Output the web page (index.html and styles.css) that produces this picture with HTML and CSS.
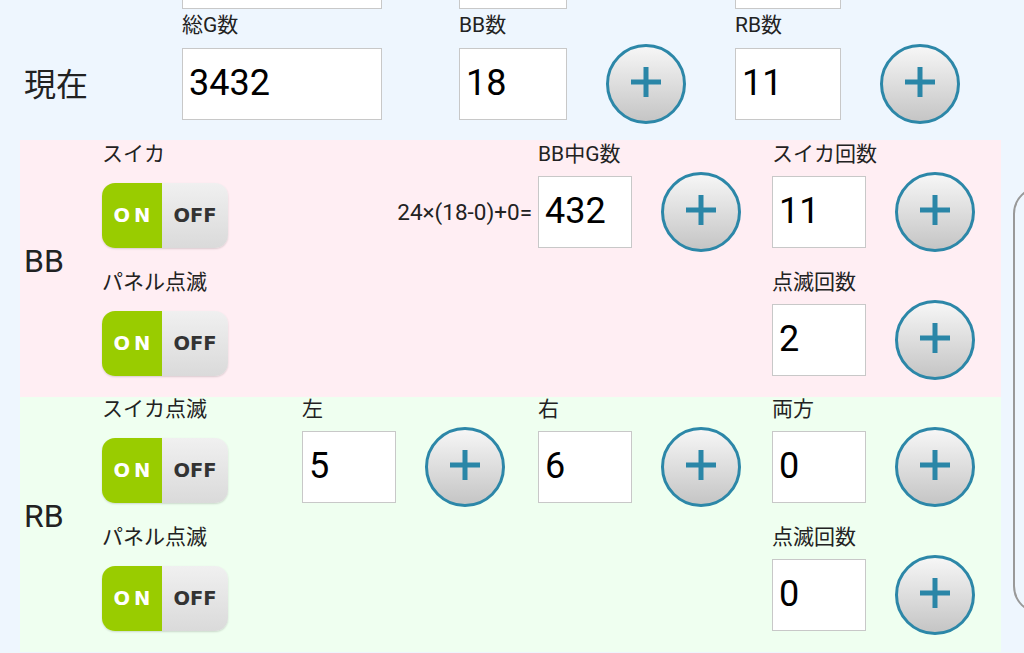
FILE: index.html
```html
<!DOCTYPE html>
<html>
<head>
    <meta charset="utf-8">
    <title>スイカ カウンター</title>
    <link rel="stylesheet" href="styles.css">
</head>
<body>
<div class="screen">

    <!-- 現在 -->
    <div class="now">
        <!-- previous row, scrolled off the top -->
        <span></span>
        <input class="num w200" type="text" value="">
        <input class="num w108" type="text" value="">
        <span></span>
        <input class="num w106" type="text" value="">
        <span></span>

        <span></span>
        <div class="lbl">総G数</div>
        <div class="lbl">BB数</div>
        <span></span>
        <div class="lbl">RB数</div>
        <span></span>

        <div class="head">現在</div>
        <input class="num w200" type="text" value="3432">
        <input class="num w108" type="text" value="18">
        <button class="plus"><svg width="30" height="30" viewBox="0 0 30 30"><path d="M15 0V30M0 15H30"/></svg></button>
        <input class="num w106" type="text" value="11">
        <button class="plus"><svg width="30" height="30" viewBox="0 0 30 30"><path d="M15 0V30M0 15H30"/></svg></button>
    </div>

    <!-- BB -->
    <div class="sec bb">
        <div class="head">BB</div>
        <div class="cell">
            <div class="lbl">スイカ</div>
            <div class="ctl"><div class="toggle"><span class="on">ON</span><span class="off">OFF</span></div></div>
        </div>
        <div class="cell">
            <div class="lbl"></div>
            <div class="ctl formula">24×(18-0)+0=</div>
        </div>
        <div class="cell">
            <div class="lbl">BB中G数</div>
            <div class="ctl">
                <input class="num" type="text" value="432">
                <button class="plus"><svg width="30" height="30" viewBox="0 0 30 30"><path d="M15 0V30M0 15H30"/></svg></button>
            </div>
        </div>
        <div class="cell">
            <div class="lbl">スイカ回数</div>
            <div class="ctl">
                <input class="num" type="text" value="11">
                <button class="plus"><svg width="30" height="30" viewBox="0 0 30 30"><path d="M15 0V30M0 15H30"/></svg></button>
            </div>
        </div>

        <div class="cell">
            <div class="lbl">パネル点滅</div>
            <div class="ctl"><div class="toggle"><span class="on">ON</span><span class="off">OFF</span></div></div>
        </div>
        <div></div>
        <div></div>
        <div class="cell">
            <div class="lbl">点滅回数</div>
            <div class="ctl">
                <input class="num" type="text" value="2">
                <button class="plus"><svg width="30" height="30" viewBox="0 0 30 30"><path d="M15 0V30M0 15H30"/></svg></button>
            </div>
        </div>
    </div>

    <!-- RB -->
    <div class="sec rb">
        <div class="head">RB</div>
        <div class="cell">
            <div class="lbl">スイカ点滅</div>
            <div class="ctl"><div class="toggle"><span class="on">ON</span><span class="off">OFF</span></div></div>
        </div>
        <div class="cell">
            <div class="lbl">左</div>
            <div class="ctl">
                <input class="num" type="text" value="5">
                <button class="plus"><svg width="30" height="30" viewBox="0 0 30 30"><path d="M15 0V30M0 15H30"/></svg></button>
            </div>
        </div>
        <div class="cell">
            <div class="lbl">右</div>
            <div class="ctl">
                <input class="num" type="text" value="6">
                <button class="plus"><svg width="30" height="30" viewBox="0 0 30 30"><path d="M15 0V30M0 15H30"/></svg></button>
            </div>
        </div>
        <div class="cell">
            <div class="lbl">両方</div>
            <div class="ctl">
                <input class="num" type="text" value="0">
                <button class="plus"><svg width="30" height="30" viewBox="0 0 30 30"><path d="M15 0V30M0 15H30"/></svg></button>
            </div>
        </div>

        <div class="cell">
            <div class="lbl">パネル点滅</div>
            <div class="ctl"><div class="toggle"><span class="on">ON</span><span class="off">OFF</span></div></div>
        </div>
        <div></div>
        <div></div>
        <div class="cell">
            <div class="lbl">点滅回数</div>
            <div class="ctl">
                <input class="num" type="text" value="0">
                <button class="plus"><svg width="30" height="30" viewBox="0 0 30 30"><path d="M15 0V30M0 15H30"/></svg></button>
            </div>
        </div>
    </div>

</div>

<!-- side panel peeking in from the right -->
<div class="panel"></div>
</body>
</html>
```

FILE: styles.css
```css
body {
    margin: 0;
    background: #eef6fe;
    font-family: Roboto, "Noto Sans CJK JP", sans-serif;
    color: #222;
    overflow: hidden;
}

.screen {
    margin-left: 20px;
    width: 981px;
}

/* labels / headings */
.lbl {
    height: 24px;
    line-height: 24px;
    font-size: 21px;
    white-space: nowrap;
}

.head {
    padding-left: 4px;
    font-size: 32px;
}

/* top block: 現在 */
.now {
    display: grid;
    grid-template-columns: 162px 277px 147px 129px 145px 80px;
    grid-template-rows: 80px 31px 80px;
    align-items: center;
    margin-top: -67px;
    padding-bottom: 16px;
}

.now .lbl {
    align-self: start;
}

.now .head {
    padding-bottom: 4px;
}

/* BB / RB blocks */
.sec {
    display: grid;
    grid-template-columns: 82px 200px 236px 234px 1fr;
    row-gap: 18px;
    padding-bottom: 17px;
}

.sec .head {
    grid-row: span 2;
    align-self: center;
}

.bb {
    background: #ffeef3;
    padding-top: 2px;
}

.rb {
    background: #effff0;
}

.cell {
    display: flex;
    flex-direction: column;
    gap: 6px;
}

.ctl {
    height: 80px;
    display: flex;
    align-items: center;
    gap: 29px;
}

.formula {
    justify-content: flex-end;
    padding-right: 6px;
    font-size: 22.5px;
}

/* number boxes */
.num {
    box-sizing: border-box;
    width: 94px;
    height: 72px;
    margin: 0;
    padding: 0 6px 3px;
    border: 1px solid #c8c8c8;
    background: #fff;
    font-family: Roboto, sans-serif;
    font-size: 36px;
    color: #000;
    outline: none;
}

.w200 { width: 200px; }
.w108 { width: 108px; }
.w106 { width: 106px; }

/* round + buttons */
.plus {
    box-sizing: border-box;
    width: 80px;
    height: 80px;
    flex: none;
    padding: 0 0 4px;
    border: 3px solid #2c87a8;
    border-radius: 50%;
    background: linear-gradient(#f6f6f6, #c5c5c5);
    display: flex;
    align-items: center;
    justify-content: center;
}

.plus path {
    stroke: #2a86a7;
    stroke-width: 5;
    fill: none;
}

/* ON / OFF switch */
.toggle {
    display: flex;
    width: 126px;
    height: 65px;
    margin-top: 7px;
    border-radius: 13px;
    overflow: hidden;
    box-shadow: 0 1px 2px rgba(0, 0, 0, 0.15);
    font-family: "DejaVu Sans", sans-serif;
    font-weight: bold;
    font-size: 19.5px;
}

.toggle span {
    display: flex;
    align-items: center;
    justify-content: center;
}

.toggle .on {
    width: 60px;
    padding-left: 4px;
    box-sizing: border-box;
    background: #99cc00;
    color: #fff;
    letter-spacing: 4px;
}

.toggle .off {
    width: 66px;
    background: linear-gradient(#f0f0f0, #dadada);
    color: #333;
}

/* drawer edge on the right */
.panel {
    position: absolute;
    left: 1013px;
    top: 186px;
    width: 80px;
    height: 424px;
    border: 2px solid #999;
    border-radius: 28px;
}
```
